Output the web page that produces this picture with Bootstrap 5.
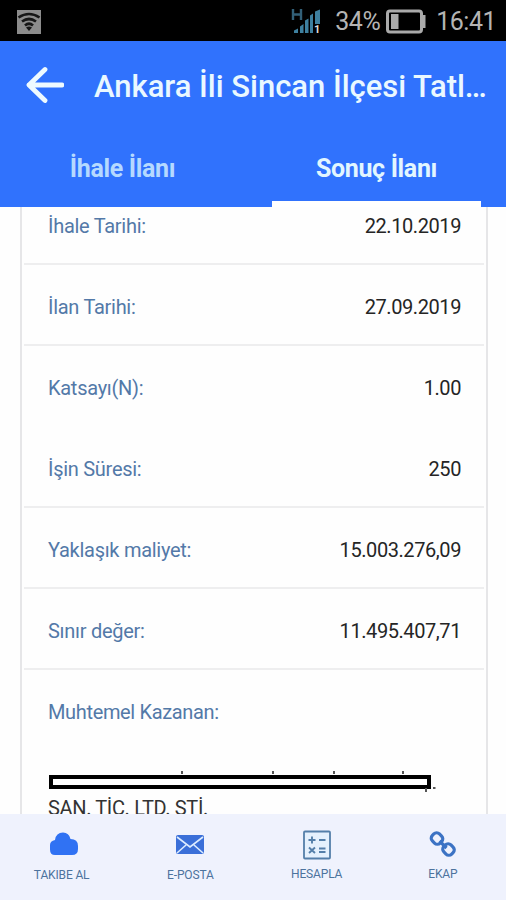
<!DOCTYPE html>
<html lang="tr">
<head>
<meta charset="utf-8">
<meta name="viewport" content="width=device-width, initial-scale=1">
<title>Sonuç İlanı</title>
<link rel="stylesheet" href="https://cdn.jsdelivr.net/npm/bootstrap@5.3.0/dist/css/bootstrap.min.css">
<style>
body{font-family:Roboto,"Liberation Sans",sans-serif;width:506px;height:900px;background:#fefefe}
svg{display:block;flex:none}
.status{height:41px;background:#000;color:#b4b4b4;font-size:25px;letter-spacing:-.5px;padding:2px 10px 0 17px}
.pct{margin:0 6px 0 14px}
.clk{margin-left:10px}
.app-head{height:166px;background:#3072fd;color:#eaf8ff}
.title-row{height:92px;padding-left:26px}
.back{margin-top:-4px}
.title{font-size:31px;font-weight:500;line-height:34px;margin-left:30px;letter-spacing:-.02px}
.tabs{height:74px;padding:0 25px 0 18px}
.tab{width:209px;font-size:25px;font-weight:700;line-height:30px;letter-spacing:-.35px;color:#b5d9ff;padding-top:21px;border-bottom:6px solid transparent}
.tab.on{color:#e2f6ff;border-color:#fff}
.sheet{margin:0 18px 0 20px;border:solid #e6e6e8;border-width:0 2px;height:607px}
.item{height:81px;margin:0 2px;padding:5px 23px 0 24px;font-size:20px;letter-spacing:-.28px;line-height:24px;color:#5379a8;border-bottom:2px solid #eeeeef}
.item b{font-weight:400;letter-spacing:-.42px;color:#252525}
.first{height:58px;padding-top:0;padding-bottom:18px}
.plain{border-color:transparent}
.winner{padding:30px 0 0 26px;font-size:20px;letter-spacing:-.35px;line-height:24px;color:#5379a8}
.redact{margin-top:51px;margin-left:1px}
.firm{color:#333;margin-top:7px;white-space:nowrap}
.bottom{height:86px;background:#eff2fd;padding-left:1px;color:#4c739e;font-size:12px;letter-spacing:-.15px}
.act{width:126.4px}
.act:first-child span{margin-right:5px}
.ico{height:52px;padding-top:16px}
.raised .ico{height:50.500px}
</style>
<script src="https://cdn.jsdelivr.net/npm/bootstrap@5.3.0/dist/js/bootstrap.bundle.min.js"></script>
</head>
<body class="overflow-hidden d-flex flex-column">
<div class="status d-flex align-items-center">
  <svg width="24" height="24" viewBox="0 0 24 24"><path fill="#8c8c8c" d="M0 0h24v24H0z"/><g fill="none" stroke="#161616" stroke-width="2.7"><path d="M1.500 7.500Q12 .5 22.500 7.500M5 11.500Q12 6.500 19 11.500M8 15.500Q12 12 16 15.500"/></g><path fill="#161616" d="M12 21l-3-3.500q3-2 6 0z"/></svg>
  <svg class="ms-auto" width="30" height="28" viewBox="0 0 30 28"><path d="M2 1v11M10 1v11M2 6.500h8" stroke="#326078" stroke-width="2.400" fill="none"/><path fill="#3e809f" d="M3 25v-2.500l4-2V25zM9 25v-6.500l3.500-2.500v9zM14 25V12.500l3.500-2V25zM19 25V7.500l3-2V25zM24 16V3.500l5-2V16z"/><text x="23" y="25" font-size="11" font-weight="700" fill="#ddd">1</text></svg>
  <span class="pct">34%</span>
  <svg width="40" height="25" viewBox="0 0 40 25"><rect x="1.500" y="2" width="34" height="21" rx="2.500" fill="none" stroke="#aaa" stroke-width="3"/><path fill="#aaa" d="M36 6h3.500v13H36zM5 5h7.500v15H5z"/></svg>
  <span class="clk">16:41</span>
</div>
<header class="app-head">
  <div class="title-row d-flex align-items-center">
    <svg class="back" width="38" height="38" viewBox="0 0 38 38"><path d="M19 3.500L3 19 19 34.500M3 19h33" fill="none" stroke="#eefaff" stroke-width="4.800" stroke-linejoin="round" stroke-linecap="round"/></svg>
    <div class="title text-nowrap">Ankara İli Sincan İlçesi Tatl…</div>
  </div>
  <div class="tabs d-flex justify-content-between">
    <div class="tab text-center">İhale İlanı</div>
    <div class="tab on text-center">Sonuç İlanı</div>
  </div>
</header>
<main class="sheet overflow-hidden">
  <div class="item first d-flex align-items-center justify-content-between"><span>İhale Tarihi:</span><b>22.10.2019</b></div>
  <div class="item d-flex align-items-center justify-content-between"><span>İlan Tarihi:</span><b>27.09.2019</b></div>
  <div class="item plain d-flex align-items-center justify-content-between"><span>Katsayı(N):</span><b>1.00</b></div>
  <div class="item d-flex align-items-center justify-content-between"><span>İşin Süresi:</span><b>250</b></div>
  <div class="item d-flex align-items-center justify-content-between"><span>Yaklaşık maliyet:</span><b>15.003.276,09</b></div>
  <div class="item d-flex align-items-center justify-content-between"><span>Sınır değer:</span><b>11.495.407,71</b></div>
  <div class="winner">
    <div>Muhtemel Kazanan:</div>
    <svg class="redact overflow-visible" width="382" height="14" viewBox="0 0 382 14"><rect x="2" y="2" width="378" height="10" fill="#fff" stroke="#000" stroke-width="4"/><path stroke="#555" stroke-width="2" d="M133-4v3M224-4v3M285-4v3M354-4v3M377 13v4M384 13h2.500"/></svg>
    <div class="firm">SAN. TİC. LTD. ŞTİ.</div>
  </div>
</main>
<nav class="bottom d-flex">
  <div class="act d-flex flex-column align-items-center"><div class="ico"><svg width="28" height="28" viewBox="0 0 28 28"><path fill="#3072f3" d="M5 25Q0 25 0 19.500V15q0-4 5-5Q6 2.500 13 2.500q6 0 7.500 6.500Q28 9 28 16v3q0 6-6 6z"/></svg></div><span>TAKIBE AL</span></div>
  <div class="act d-flex flex-column align-items-center"><div class="ico"><svg width="28" height="28" viewBox="0 0 28 28"><rect y="5" width="28" height="19" rx="2" fill="#3a6fd8"/><path d="M1 7l13 10L27 7M1 23l9-8M27 23l-9-8" fill="none" stroke="#dcecff" stroke-width="1.600"/></svg></div><span>E-POSTA</span></div>
  <div class="act raised d-flex flex-column align-items-center"><div class="ico"><svg width="28" height="30" viewBox="0 0 28 30"><rect x="1" y="1.500" width="26" height="27" rx="1" fill="#e5f1fd" stroke="#547fa9" stroke-width="1.800"/><path d="M5.500 10h7M9 6.500v7M16 10h6.500M6 17.500l6 5.500M12 17.500L6 23M16 18.500h6.500M16 22h6.500" stroke="#547fa9" stroke-width="1.900"/></svg></div><span>HESAPLA</span></div>
  <div class="act raised d-flex flex-column align-items-center"><div class="ico"><svg width="28" height="28" viewBox="0 0 28 28"><g fill="none" stroke="#3c73c4" stroke-width="3.200"><rect x="2.500" y="3.500" width="11" height="10" rx="4" transform="rotate(45 8 8.500)"/><rect x="14" y="14.500" width="11" height="10" rx="4" transform="rotate(45 19.500 19.500)"/><path d="M10.500 11l7 7"/></g></svg></div><span>EKAP</span></div>
</nav>
</body>
</html>
